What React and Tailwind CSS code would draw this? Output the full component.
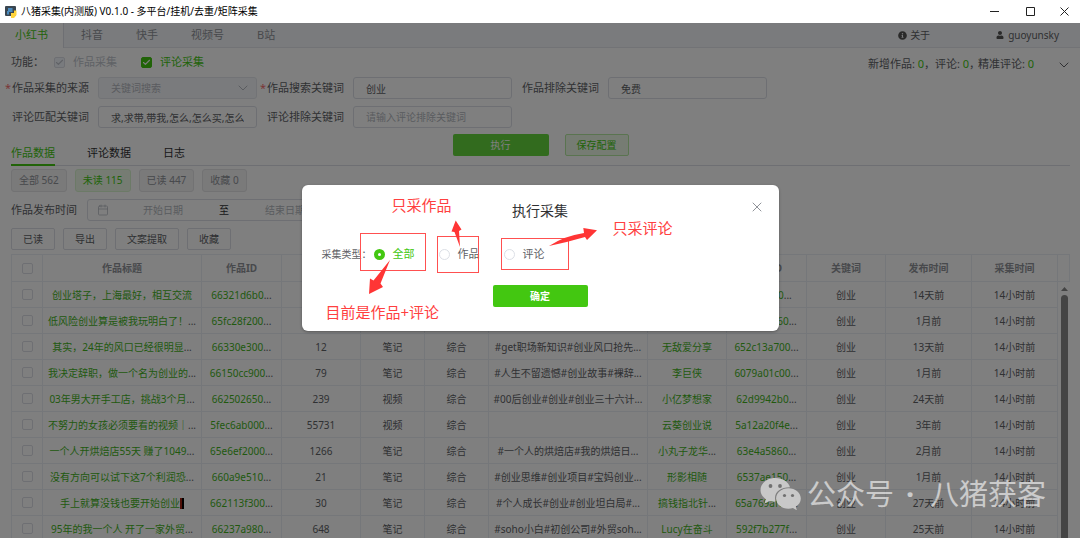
import React, { useState } from 'react';
import { Calendar, Check, ChevronDown, X } from 'lucide-react';
import { FaInfoCircle, FaUser } from 'react-icons/fa';

const platforms = ['小红书', '抖音', '快手', '视频号', 'B站'];

const filters = [
  { label: '全部', count: 562 },
  { label: '未读', count: 115 },
  { label: '已读', count: 447 },
  { label: '收藏', count: 0 },
];

const columns = [
  { label: '作品标题', width: 159 },
  { label: '作品ID', width: 80 },
  { label: '点赞数', width: 79 },
  { label: '类型', width: 64 },
  { label: '排序', width: 64 },
  { label: '标签', width: 159 },
  { label: '作者', width: 79 },
  { label: '作者ID', width: 80 },
  { label: '关键词', width: 79 },
  { label: '发布时间', width: 86 },
  { label: '采集时间', width: 86 },
];

const rows = [
  { title: '创业塔子，上海最好，相互交流', id: '66321d6b0...', likes: '', type: '笔记', sort: '综合', tags: '', author: '', authorId: '5f3a81c0...', time: '14天前' },
  { title: '低风险创业算是被我玩明白了！...', id: '65fc28f200...', likes: '', type: '笔记', sort: '综合', tags: '', author: '', authorId: '640b7d260...', time: '1月前' },
  { title: '其实，24年的风口已经很明显...', id: '66330e300...', likes: '12', type: '笔记', sort: '综合', tags: '#get职场新知识#创业风口抢先...', author: '无敌爱分享', authorId: '652c13a700...', time: '13天前' },
  { title: '我决定辞职，做一个名为创业的...', id: '66150cc900...', likes: '79', type: '笔记', sort: '综合', tags: '#人生不留遗憾#创业故事#裸辞...', author: '李巨侠', authorId: '6079a01c00...', time: '1月前' },
  { title: '03年男大开手工店，挑战3个月...', id: '662502650...', likes: '239', type: '视频', sort: '综合', tags: '#00后创业#创业#创业三十六计...', author: '小亿梦想家', authorId: '62d9942b0...', time: '24天前' },
  { title: '不努力的女孩必须要看的视频｜...', id: '5fec6ab000...', likes: '55731', type: '视频', sort: '综合', tags: '', author: '云葵创业说', authorId: '5a12a20f4e...', time: '3年前' },
  { title: '一个人开烘焙店55天 赚了1049...', id: '65e6ef2000...', likes: '1266', type: '笔记', sort: '综合', tags: '#一个人的烘焙店#我的烘焙日...', author: '小丸子龙华...', authorId: '63e4a5860...', time: '2月前' },
  { title: '没有方向可以试下这7个利润恐...', id: '660a9e510...', likes: '21', type: '笔记', sort: '综合', tags: '#创业思维#创业项目#宝妈创业...', author: '形影相随', authorId: '6537ae150...', time: '1月前' },
  { title: '手上就算没钱也要开始创业', mark: true, id: '662113f300...', likes: '30', type: '笔记', sort: '综合', tags: '#个人成长#创业#创业坦白局#...', author: '搞钱指北针...', authorId: '65a769af00...', time: '27天前' },
  { title: '95年的我一个人 开了一家外贸...', id: '66237a980...', likes: '648', type: '笔记', sort: '综合', tags: '#soho小白#初创公司#外贸soh...', author: 'Lucy在奋斗', authorId: '592f7b277f...', time: '25天前' },
];

const TitleBar = () => (
  <header className="flex h-[23px] shrink-0 items-center bg-white pl-[5px] text-[10px] text-black">
    <svg className="mr-1 h-3 w-3" viewBox="0 0 12 12">
      <rect width="11" height="10" rx="1" fill="#3a4650" />
      <path d="M3 2h4.500v4H4v2.500H2V5h1z" fill="#4b8bbe" />
      <path d="M6 7h3V4.500h2.500V9L9 12H6z" fill="#ffd43b" />
    </svg>
    <span>八猪采集(内测版) V0.1.0 - 多平台/挂机/去重/矩阵采集</span>
    <div className="ml-auto flex h-full">
      <button aria-label="最小化" className="flex w-9 items-center justify-center">
        <svg className="h-[9px] w-[9px]" viewBox="0 0 9 9"><path d="M0 4.500h9" stroke="#222" /></svg>
      </button>
      <button aria-label="最大化" className="flex w-9 items-center justify-center">
        <svg className="h-[9px] w-[9px]" viewBox="0 0 9 9"><path d="M.5.5h8v8h-8z" fill="none" stroke="#222" /></svg>
      </button>
      <button aria-label="关闭窗口" className="flex w-8 items-center justify-center">
        <svg className="h-[9px] w-[9px]" viewBox="0 0 9 9"><path d="M.5.5l8 8M8.500.5l-8 8" stroke="#222" /></svg>
      </button>
    </div>
  </header>
);

const PlatformTabs = () => (
  <nav className="flex h-[25px] items-stretch border-b border-[#e4e7ed] bg-[#f5f7fa] text-[11px] text-[#909399]">
    <div className="flex gap-px">
      {platforms.map((name, i) => (
        <button
          key={name}
          className={i === 0 ? '-mb-px border-r border-[#dcdfe6] bg-white px-[15px] text-[#43c711]' : 'px-4'}
        >
          {name}
        </button>
      ))}
    </div>
    <div className="ml-auto flex items-center gap-[66px] pr-[21px] text-[10px] text-[#606266]">
      <a href="#about" className="flex items-center gap-[3px]">
        <FaInfoCircle size={9} className="text-[#555]" />
        关于
      </a>
      <a href="#user" className="flex items-center gap-1">
        <FaUser size={8} className="text-[#555]" />
        guoyunsky
      </a>
    </div>
  </nav>
);

const CheckOption = ({ label, disabled }) => (
  <label className={`flex items-center gap-2 ${disabled ? 'text-[#c0c4cc]' : 'text-[#43c711]'}`}>
    <span className="grid place-items-center">
      <input
        type="checkbox"
        defaultChecked
        disabled={disabled}
        className={`col-start-1 row-start-1 h-[11px] w-[11px] appearance-none rounded-[2px] border ${
          disabled ? 'border-[#dcdfe6] bg-[#f2f6fc]' : 'border-[#43c711] bg-[#43c711]'
        }`}
      />
      <Check
        size={9}
        strokeWidth={3}
        className={`pointer-events-none col-start-1 row-start-1 ${disabled ? 'text-[#c0c4cc]' : 'text-white'}`}
      />
    </span>
    {label}
  </label>
);

const Field = ({ id, label, required, children }) => (
  <div className="flex items-center gap-[9px]">
    <label htmlFor={id} className="w-[84px] whitespace-nowrap text-right text-[11px] text-[#606266]">
      {required && <span className="mr-px text-[#f56c6c]">*</span>}
      {label}
    </label>
    {children}
  </div>
);

const inputClass =
  'h-[22px] w-[159px] rounded-[3px] border border-[#dcdfe6] bg-white px-3 text-[10px] text-[#606266] placeholder:text-[#b4b8c0]';

const SearchForm = () => (
  <form className="grid grid-cols-[repeat(3,252px)] gap-x-[3px] gap-y-[7px] pl-[5px]">
    <Field id="source" label="作品采集的来源" required>
      <div className="grid items-center">
        <select
          id="source"
          disabled
          className="col-start-1 row-start-1 h-[22px] w-[159px] appearance-none rounded-[3px] border border-[#e4e7ed] bg-[#f5f7fa] px-3 text-[10px] text-[#b4b8c0] opacity-100"
        >
          <option>关键词搜索</option>
        </select>
        <ChevronDown
          size={16}
          strokeWidth={1.5}
          className="pointer-events-none col-start-1 row-start-1 mr-[6px] justify-self-end text-[#b4b8c0]"
        />
      </div>
    </Field>
    <Field id="search" label="作品搜索关键词" required>
      <input id="search" className={inputClass} defaultValue="创业" />
    </Field>
    <Field id="exclude" label="作品排除关键词">
      <input id="exclude" className={inputClass} defaultValue="免费" />
    </Field>
    <Field id="match" label="评论匹配关键词">
      <input id="match" className={inputClass} defaultValue="求,求带,带我,怎么,怎么买,怎么做" />
    </Field>
    <Field id="commentExclude" label="评论排除关键词">
      <input id="commentExclude" className={inputClass} placeholder="请输入评论排除关键词" />
    </Field>
  </form>
);

// green link text, with the cut-off dots in the cell's own colour
const LinkText = ({ text }) => {
  const cut = text.endsWith('...');
  return (
    <>
      <a href="#detail" className="text-[#43b31c]">{cut ? text.slice(0, -3) : text}</a>
      {cut && '...'}
    </>
  );
};

const Cell = ({ children }) => (
  <td className="h-[26px] border-b border-r border-[#ebeef5] p-0">
    <div className="flex justify-center whitespace-nowrap">{children}</div>
  </td>
);

const boxClass = 'mx-auto block h-[11px] w-[11px] appearance-none rounded-[2px] border border-[#dcdfe6] bg-white';

const DataTable = () => (
  <div className="mt-1 flex items-stretch border-l border-t border-[#ebeef5]">
    <table className="w-full table-fixed border-separate border-spacing-0 text-[10px] leading-[14px] text-[#606266]">
      <colgroup>
        <col style={{ width: 31 }} />
        {columns.map((c) => (
          <col key={c.label} style={{ width: c.width }} />
        ))}
      </colgroup>
      <thead>
        <tr>
          <th className="h-[27px] border-b border-r border-[#ebeef5] p-0">
            <input type="checkbox" aria-label="全选" className={boxClass} />
          </th>
          {columns.map((c) => (
            <th key={c.label} className="border-b border-r border-[#ebeef5] p-0 text-center font-bold text-[#909399]">
              {c.label}
            </th>
          ))}
        </tr>
      </thead>
      <tbody>
        {rows.map((r) => (
          <tr key={r.id}>
            <td className="border-b border-r border-[#ebeef5] p-0">
              <input type="checkbox" aria-label={r.title} className={boxClass} />
            </td>
            <Cell>
              <LinkText text={r.title} />
              {r.mark && <span className="mt-0.5 h-[11px] w-1 border-l-2 border-[#a02010] bg-black" />}
            </Cell>
            <Cell><LinkText text={r.id} /></Cell>
            <Cell>{r.likes}</Cell>
            <Cell>{r.type}</Cell>
            <Cell>{r.sort}</Cell>
            <Cell>{r.tags}</Cell>
            <Cell><LinkText text={r.author} /></Cell>
            <Cell><LinkText text={r.authorId} /></Cell>
            <Cell>创业</Cell>
            <Cell>{r.time}</Cell>
            <Cell>14小时前</Cell>
          </tr>
        ))}
      </tbody>
    </table>
    <div className="flex w-3 shrink-0 flex-col items-center">
      <div className="h-[27px] w-full shrink-0 border-b border-r border-[#ebeef5]" />
      <svg className="mt-[5px] h-1 w-[7px] shrink-0" viewBox="0 0 7 4"><path d="M3.500 0L7 4H0z" fill="#888" /></svg>
      <div className="mt-1 w-[7px] flex-1 rounded-t-full bg-[#888]" />
    </div>
  </div>
);

const Annotations = () => (
  <>
    <svg className="pointer-events-none absolute inset-0 h-full w-full" viewBox="0 0 477 146">
      <g fill="none" stroke="#ff5050">
        <rect x="58.500" y="48.500" width="65" height="37" />
        <rect x="135.500" y="51.500" width="41" height="36" />
        <rect x="199.500" y="53.500" width="67" height="31" />
      </g>
      <g fill="#ff3535">
        <path d="M88 75L78.500 98.500L81 102L67 109L68 93.500L71.500 95.500Z" />
        <path d="M158 62L152.500 47L149.500 46.500L153.700 35.500L159.500 44.500L157 46Z" />
        <path d="M247 61Q262 51 282 48L281.300 43L295 45.300L285 55L283 52Q266 57 247 61Z" />
      </g>
    </svg>
    <span className="absolute left-[90px] top-[10px] text-[15px] leading-5 text-[#ff4040]">只采作品</span>
    <span className="absolute left-[311px] top-[33px] text-[15px] leading-5 text-[#ff4040]">只采评论</span>
    <span className="absolute left-6 top-[117px] text-[15px] leading-5 text-[#ff4040]">目前是作品+评论</span>
  </>
);

const CollectDialog = () => {
  const [kind, setKind] = useState('全部');

  return (
    <div
      role="dialog"
      aria-labelledby="dialog-title"
      className="relative mx-auto mt-[162px] w-[477px] max-w-full rounded-md bg-white pb-6 pt-4 shadow-[0_1px_3px_rgba(0,0,0,0.3)]"
    >
      <h2 id="dialog-title" className="text-center text-[14px] leading-5 text-[#303133]">执行采集</h2>
      <button aria-label="关闭" className="absolute right-[14px] top-[14px] text-[#909399]">
        <X size={16} strokeWidth={1.5} />
      </button>
      <fieldset className="mt-[22px] flex h-[22px] items-center pl-5 text-[11px] text-[#606266]">
        <span className="w-[52px] text-[10px]">采集类型：</span>
        <div className="flex gap-6">
          {['全部', '作品', '评论'].map((k) => (
            <label key={k} className={`flex items-center gap-2 ${kind === k ? 'text-[#43c711]' : ''}`}>
              <input
                type="radio"
                name="kind"
                checked={kind === k}
                onChange={() => setKind(k)}
                className="h-[11px] w-[11px] appearance-none rounded-full border border-[#dcdfe6] bg-white checked:border-4 checked:border-[#43c711]"
              />
              {k}
            </label>
          ))}
        </div>
      </fieldset>
      <button className="mx-auto mt-5 block h-[22px] w-[95px] rounded-[2px] bg-[#43c711] text-[10px] font-bold text-white">
        确定
      </button>
      <Annotations />
    </div>
  );
};

const Watermark = () => (
  <div className="pointer-events-none absolute bottom-[26px] right-[34px] flex items-center text-[29px] leading-9 text-white/60">
    <svg className="mr-[6px] h-8 w-[41px]" viewBox="0 0 41 32">
      <path
        fill="#c8c8c8"
        d="M15.500 0C7 0 .5 5.300.5 12c0 3.800 2 7 5.300 9.200L4.500 25.500l5-2.600c1.900.6 3.900.9 6 .8C13 14.500 20 9 30 9.200 28.500 3.800 22.600 0 15.500 0z"
      />
      <path
        fill="#c8c8c8"
        d="M28.500 10.300c-7 0-12.400 4.500-12.400 10.200s5.400 10.200 12.400 10.200c1.600 0 3-.2 4.400-.6l4 2.200-1.100-3.600c3-1.900 5-4.800 5-8.200 0-5.700-5.400-10.200-12.300-10.200z"
      />
      <g fill="#707070">
        <circle cx="10.500" cy="8" r="1.900" />
        <circle cx="20" cy="8" r="1.900" />
        <circle cx="24.500" cy="17.500" r="1.600" />
        <circle cx="32.500" cy="17.500" r="1.600" />
      </g>
    </svg>
    <span>公众号</span>
    <span className="w-9 pr-1 text-center font-bold">·</span>
    <span>八猪获客</span>
  </div>
);

export default function App() {
  const [filter, setFilter] = useState('未读');

  return (
    <div className="flex h-screen flex-col overflow-hidden bg-white font-['Noto_Sans','Noto_Sans_CJK_SC',sans-serif]">
      <TitleBar />
      <div className="relative min-h-0 flex-1 overflow-hidden">
        <PlatformTabs />
        <main className="pl-[11px] pr-[10px]">
          <div className="flex h-[29px] items-center text-[11px] text-[#606266]">
            <span className="w-[43px]">功能：</span>
            <div className="flex gap-6">
              <CheckOption label="作品采集" disabled />
              <CheckOption label="评论采集" />
            </div>
            <div className="ml-auto flex items-center whitespace-nowrap pt-1">
              <p className="flex">
                <span className="w-[67px]">新增作品: <b className="font-normal text-[#43c711]">0</b>，</span>
                <span className="w-[43px]">评论: <b className="font-normal text-[#43c711]">0</b>，</span>
                <span>精准评论: <b className="font-normal text-[#43c711]">0</b></span>
              </p>
              <button aria-label="展开" className="-mr-0.5 ml-[22px]">
                <ChevronDown size={16} strokeWidth={1.5} />
              </button>
            </div>
          </div>

          <div className="-ml-[11px]">
            <SearchForm />
          </div>

          <div className="mt-[6px] grid h-8 grid-cols-[1fr_auto_1fr] border-b border-[#dcdfe6]">
            <div className="-mb-px flex gap-8 self-end text-[11px] text-[#303133]">
              <button className="h-[23px] border-b-2 border-[#43c711] text-[#43c711]">作品数据</button>
              <button className="h-[23px] border-b-2 border-transparent">评论数据</button>
              <button className="h-[23px] border-b-2 border-transparent">日志</button>
            </div>
            <div className="flex h-[22px] gap-4 text-[10px]">
              <button className="w-24 rounded-[2px] bg-[#64d63c] text-white">执行</button>
              <button className="w-16 rounded-[2px] border border-[#b4e9a0] bg-[#ecf9e7] text-[#43c711]">保存配置</button>
            </div>
          </div>

          <div className="mt-[3px] flex gap-2 text-[10px]">
            {filters.map((f) => (
              <button
                key={f.label}
                onClick={() => setFilter(f.label)}
                className={`h-[23px] rounded-[3px] border px-[7px] ${
                  filter === f.label
                    ? 'border-[#d9f4cf] bg-[#ecf9e7] text-[#43c711]'
                    : 'border-[#e4e4e6] bg-[#f4f4f5] text-[#909399]'
                }`}
              >
                {f.label} {f.count}
              </button>
            ))}
          </div>

          <div className="mt-[7px] flex items-center gap-[10px]">
            <label htmlFor="from" className="text-[11px] text-[#606266]">作品发布时间</label>
            <div className="flex h-[22px] items-center rounded-[3px] border border-[#dcdfe6] px-[9px] text-[10px]">
              <Calendar size={12} strokeWidth={1.5} className="mr-2 text-[#b4b8c0]" />
              <input id="from" className="w-[92px] text-center placeholder:text-[#b4b8c0]" placeholder="开始日期" />
              <span className="w-[30px] text-center text-[#303133]">至</span>
              <input aria-label="结束日期" className="w-[92px] text-center placeholder:text-[#b4b8c0]" placeholder="结束日期" />
            </div>
          </div>

          <div className="mt-[7px] flex gap-2 text-[10px] text-[#606266]">
            {['已读', '导出', '文案提取', '收藏'].map((name) => (
              <button key={name} className="h-[22px] rounded-[2px] border border-[#dcdfe6] bg-white px-[11px]">
                {name}
              </button>
            ))}
          </div>

          <DataTable />
        </main>

        <div className="absolute inset-0 bg-black/50">
          <CollectDialog />
          <Watermark />
        </div>
      </div>
    </div>
  );
}
